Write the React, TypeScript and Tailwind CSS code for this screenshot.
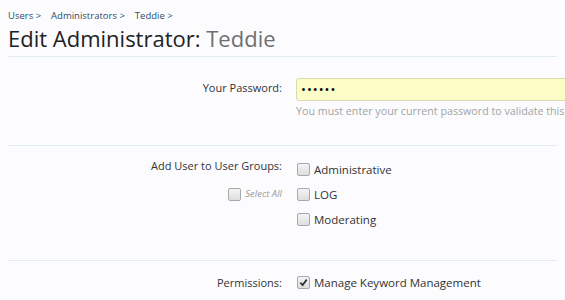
import React from "react";

function Box({ checked = false }: { checked?: boolean }) {
  return (
    <span className="inline-flex h-[13px] w-[13px] shrink-0 items-center justify-center rounded-[2px] border border-[#a9a9a9] bg-gradient-to-b from-[#f4f4f4] to-[#dedede]">
      {checked && (
        <svg width="9" height="9" viewBox="0 0 10 10">
          <path d="M1.5 5.2 L4 7.8 L8.6 1.8" fill="none" stroke="#333" strokeWidth="2" />
        </svg>
      )}
    </span>
  );
}

function Option({ label, checked = false }: { label: string; checked?: boolean }) {
  return (
    <div className="flex h-[25px] items-center gap-[4px] pl-[1px]">
      <Box checked={checked} />
      <span className="text-[11.5px] text-[#333]">{label}</span>
    </div>
  );
}

export default function App() {
  return (
    <div className="h-[300px] w-[565px] overflow-hidden bg-[#fcfcff] font-['Segoe_UI','Open_Sans',sans-serif] text-[#333]">
      <div className="px-[8px]">
        <div className="flex gap-[10px] pt-[9px] text-[9.5px] leading-[14px] text-[#2b4d66]">
          <span>Users &gt;</span>
          <span>Administrators &gt;</span>
          <span>Teddie &gt;</span>
        </div>
        <h1 className="mt-[1px] text-[22px] leading-[28px] text-[#222]">
          Edit Administrator: <span className="text-[#6f6f6f]">Teddie</span>
        </h1>
        <div className="mt-[4px] border-b border-[#e0ecf0]" />

        <div className="grid grid-cols-[274px_1fr] gap-x-[14px] pt-[21px] pb-[27px]">
          <div className="pt-[2px] text-right text-[11px] leading-[16px]">Your Password:</div>
          <div>
            <div className="mr-[-20px] flex h-[23px] items-center rounded-[3px] border border-[#d9dcb0] bg-[#fcfcc6] pl-[4px] text-[13px] tracking-[1px] text-black">
              ••••••
            </div>
            <div className="mt-[3px] whitespace-nowrap text-[10.7px] leading-[14px] text-[#a3a3a3]">
              You must enter your current password to validate this request.
            </div>
          </div>
        </div>
        <div className="border-b border-[#e0ecf0]" />

        <div className="grid grid-cols-[274px_1fr] gap-x-[14px] pt-[12px] pb-[28px]">
          <div className="flex flex-col items-end">
            <div className="text-[11px] leading-[16px]">Add User to User Groups:</div>
            <div className="mt-[13px] flex items-center gap-[4px]">
              <Box />
              <span className="text-[9.5px] italic text-[#999]">Select All</span>
            </div>
          </div>
          <div className="mt-[-1px]">
            <Option label="Administrative" />
            <Option label="LOG" />
            <Option label="Moderating" />
          </div>
        </div>
        <div className="border-b border-[#e0ecf0]" />

        <div className="grid grid-cols-[274px_1fr] gap-x-[14px] pt-[14px]">
          <div className="text-right text-[11px] leading-[16px]">Permissions:</div>
          <div className="mt-[-5px]">
            <Option label="Manage Keyword Management" checked />
          </div>
        </div>
      </div>
    </div>
  );
}
